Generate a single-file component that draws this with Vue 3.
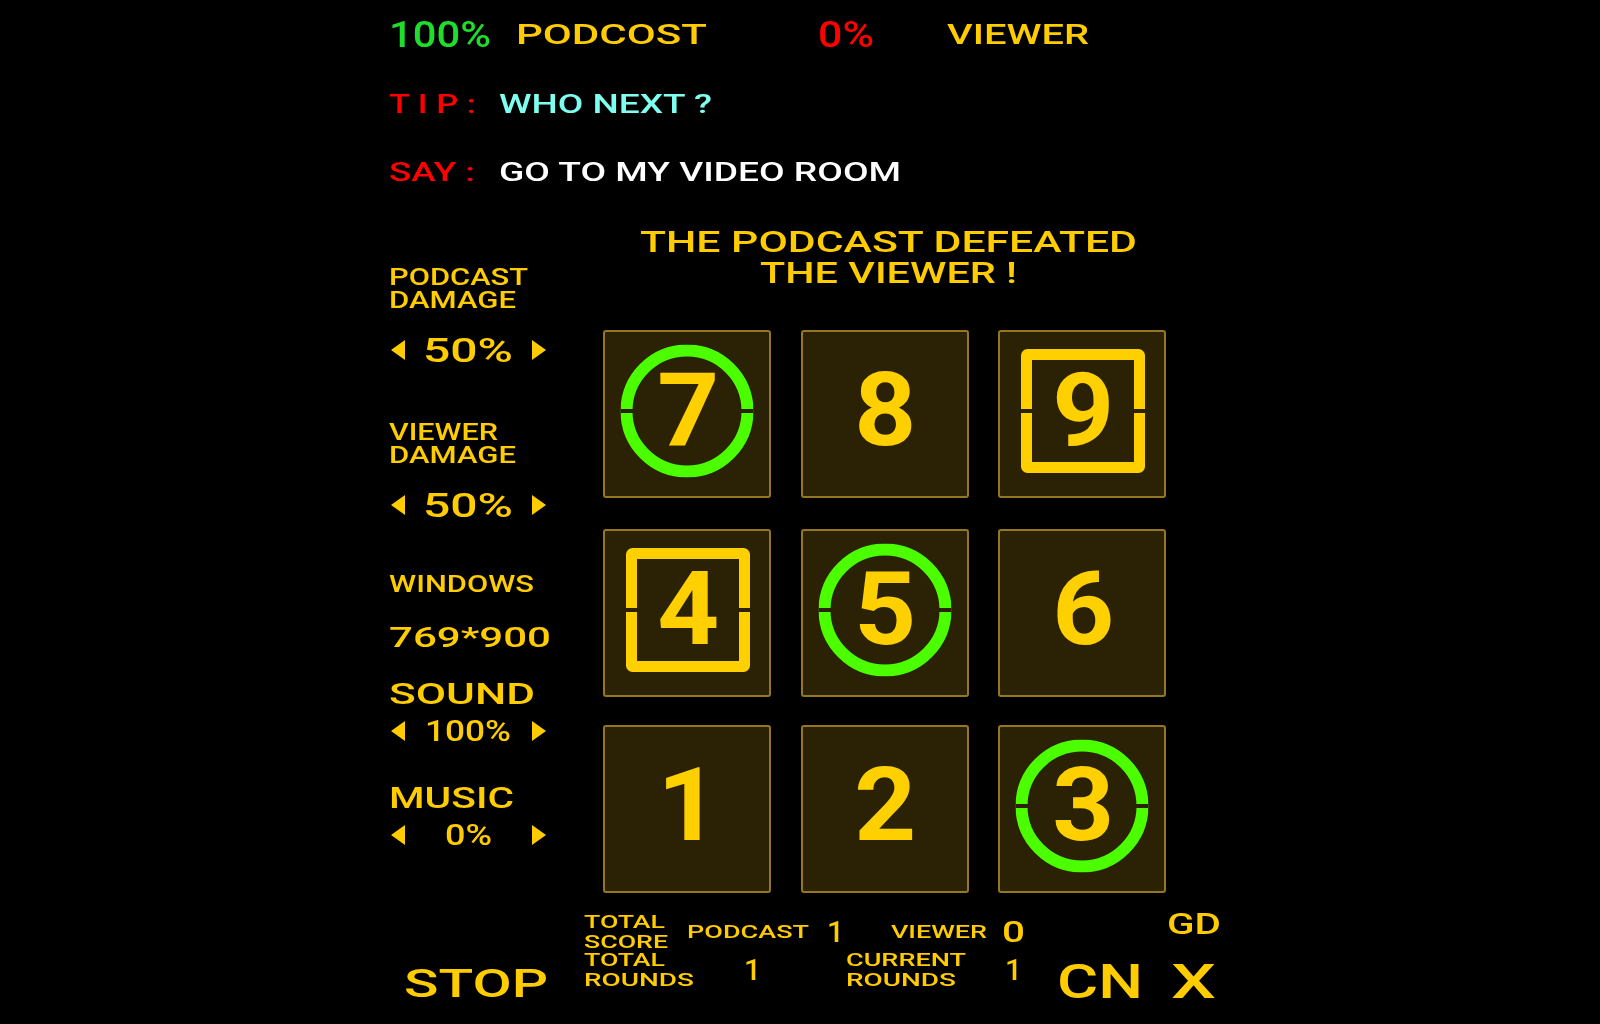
<script setup>
const vFit = {
  mounted(el, binding) {
    const natural = el.getBoundingClientRect().width
    el.style.transform = `scaleX(${binding.value / natural})`
    el.style.marginRight = `${binding.value - natural}px`
  }
}
const cards = [
  { n: 7, mark: 'ring' }, { n: 8 }, { n: 9, mark: 'square' },
  { n: 4, mark: 'square' }, { n: 5, mark: 'ring' }, { n: 6 },
  { n: 1 }, { n: 2 }, { n: 3, mark: 'ring' }
]
</script>

<template>
  <div class="stage">
    <div class="top r1">
      <span class="cell w127"><span class="t big green" v-fit="102">100%</span></span>
      <span class="cell w302"><span class="t head gold" v-fit="191">PODCOST</span></span>
      <span class="cell w129"><span class="t big red" v-fit="56">0%</span></span>
      <span class="t head gold" v-fit="142">VIEWER</span>
    </div>
    <div class="top r2">
      <span class="cell w110"><span class="t tip red" v-fit="87">T I P :</span></span>
      <span class="t tip cyan" v-fit="213">WHO NEXT ?</span>
    </div>
    <div class="top r2">
      <span class="cell w110"><span class="t tip red" v-fit="86">SAY :</span></span>
      <span class="t tip white" v-fit="402">GO TO MY VIDEO ROOM</span>
    </div>

    <div class="main">
      <aside class="side">
        <div class="label first">
          <div class="row22"><span class="t lab" v-fit="139">PODCAST</span></div>
          <div class="row22"><span class="t lab" v-fit="127">DAMAGE</span></div>
        </div>
        <div class="stepper s1">
          <svg class="arrow" viewBox="0 0 14 20"><polygon points="14,0 14,20 0,10" /></svg>
          <span class="t val" v-fit="90">50%</span>
          <svg class="arrow" viewBox="0 0 14 20"><polygon points="0,0 0,20 14,10" /></svg>
        </div>
        <div class="label second">
          <div class="row22"><span class="t lab" v-fit="109">VIEWER</span></div>
          <div class="row22"><span class="t lab" v-fit="127">DAMAGE</span></div>
        </div>
        <div class="stepper s1">
          <svg class="arrow" viewBox="0 0 14 20"><polygon points="14,0 14,20 0,10" /></svg>
          <span class="t val" v-fit="90">50%</span>
          <svg class="arrow" viewBox="0 0 14 20"><polygon points="0,0 0,20 14,10" /></svg>
        </div>
        <div class="line windows"><span class="t lab" v-fit="145">WINDOWS</span></div>
        <div class="line size"><span class="t sizeval" v-fit="162">769*900</span></div>
        <div class="line sound"><span class="t lab3" v-fit="146">SOUND</span></div>
        <div class="stepper s2">
          <svg class="arrow" viewBox="0 0 14 20"><polygon points="14,0 14,20 0,10" /></svg>
          <span class="t val2" v-fit="86">100%</span>
          <svg class="arrow" viewBox="0 0 14 20"><polygon points="0,0 0,20 14,10" /></svg>
        </div>
        <div class="line music"><span class="t lab3" v-fit="125">MUSIC</span></div>
        <div class="stepper s3">
          <svg class="arrow" viewBox="0 0 14 20"><polygon points="14,0 14,20 0,10" /></svg>
          <span class="t val2" v-fit="47">0%</span>
          <svg class="arrow" viewBox="0 0 14 20"><polygon points="0,0 0,20 14,10" /></svg>
        </div>
      </aside>

      <section class="board">
        <div class="title">
          <div class="row31"><span class="t ttl" v-fit="497">THE PODCAST DEFEATED</span></div>
          <div class="row31"><span class="t ttl" v-fit="257">THE VIEWER !</span></div>
        </div>
        <div class="grid">
          <div v-for="c in cards" :key="c.n" class="card">
            <span class="digit">{{ c.n }}</span>
            <svg v-if="c.mark === 'ring'" class="mark ring" viewBox="0 0 133 133">
              <circle cx="66.5" cy="66.5" r="60.5" />
              <rect x="0" y="64.5" width="133" height="4" />
            </svg>
            <svg v-if="c.mark === 'square'" class="mark square" viewBox="0 0 124 124">
              <rect class="frame" x="5.5" y="5.5" width="113" height="113" rx="1" />
              <rect class="cut" x="0" y="60" width="124" height="4" />
            </svg>
          </div>
        </div>
      </section>
    </div>

    <footer class="bottom">
      <div class="stopcol"><span class="t stop" v-fit="144">STOP</span></div>
      <div class="stats">
        <div class="statrow">
          <div class="c103 two">
            <div class="row20"><span class="t st" v-fit="81">TOTAL</span></div>
            <div class="row20"><span class="t st" v-fit="84">SCORE</span></div>
          </div>
          <span class="cell c143"><span class="t st" v-fit="122">PODCAST</span></span>
          <span class="cell c61"><span class="num">1</span></span>
          <span class="cell c111"><span class="t st" v-fit="96">VIEWER</span></span>
          <span class="t num" v-fit="23">0</span>
        </div>
        <div class="statrow">
          <div class="c162 two">
            <div class="row20"><span class="t st" v-fit="81">TOTAL</span></div>
            <div class="row20"><span class="t st" v-fit="110">ROUNDS</span></div>
          </div>
          <span class="cell c100"><span class="num">1</span></span>
          <div class="c161 two">
            <div class="row20"><span class="t st" v-fit="120">CURRENT</span></div>
            <div class="row20"><span class="t st" v-fit="110">ROUNDS</span></div>
          </div>
          <span class="num">1</span>
        </div>
      </div>
      <div class="rightcol">
        <div class="gd"><span class="t gdt" v-fit="54">GD</span></div>
        <div class="cnx">
          <span class="t cn" v-fit="86">CN</span>
          <span class="t cn" v-fit="45">X</span>
        </div>
      </div>
    </footer>
  </div>
</template>

<style scoped>
.stage {
  box-sizing: border-box;
  height: 1024px;
  overflow: hidden;
  padding-left: 389px;
  background: #000;
  color: #ffcc00;
  font-family: Roboto, "Liberation Sans", sans-serif;
  font-weight: 500;
  filter: blur(0.4px);
}
.t {
  display: inline-block;
  white-space: nowrap;
  transform-origin: left center;
}
.cell { display: flex; align-items: center; flex: none; }
.top { display: flex; align-items: center; }
.r1 { height: 70px; }
.r2 { height: 68px; }
.w127 { width: 127px; }
.w302 { width: 302px; }
.w129 { width: 129px; }
.w110 { width: 110px; }
.big { font-size: 36px; line-height: 36px; }
.head { font-size: 27px; line-height: 30px; }
.tip { font-size: 26px; line-height: 28px; }
.green { color: #1ede2b; }
.red { color: #ff0000; }
.cyan { color: #7ffff0; }
.white { color: #ffffff; }
.gold { color: #ffcc00; }

.main { display: flex; }
.side { width: 214px; flex: none; }
.row22 { display: flex; height: 22.5px; align-items: center; }
.row31 { display: flex; height: 31px; align-items: center; justify-content: center; }
.row20 { display: flex; height: 20px; align-items: center; }
.first { margin-top: 61px; }
.second { margin-top: 56px; }
.lab { font-size: 23px; line-height: 22px; }
.sizeval { font-size: 28px; line-height: 24px; }
.lab3 { font-size: 29px; line-height: 26px; }
.stepper {
  width: 155px;
  margin-left: 2px;
  display: flex;
  align-items: center;
  justify-content: space-between;
}
.s1 { height: 32px; margin-top: 22px; }
.s2 { height: 28px; margin-top: 10px; }
.s3 { height: 28px; margin-top: 10px; }
.arrow { width: 14px; height: 20px; fill: #ffcc00; flex: none; }
.val { font-size: 34px; line-height: 32px; margin-left: -2px; }
.val2 { font-size: 30px; line-height: 28px; margin-left: -1px; }
.line { display: flex; align-items: center; }
.windows { height: 24px; margin-top: 52px; }
.size { height: 24px; margin-top: 29px; }
.sound { height: 26px; margin-top: 31px; }
.music { height: 26px; margin-top: 40px; }

.board { width: 564px; flex: none; }
.title {
  margin-top: 21px;
  padding-left: 6px;
}
.ttl { font-size: 29px; line-height: 31px; }
.grid {
  margin-top: 40.5px;
  display: grid;
  grid-template-columns: repeat(3, 168px);
  grid-template-rows: 199.5px 196px 168px;
  column-gap: 29.5px;
}
.card {
  box-sizing: border-box;
  height: 168px;
  position: relative;
  display: flex;
  align-items: center;
  justify-content: center;
  background: #2b2205;
  border: 2px solid #947720;
  border-radius: 3px;
}
.digit {
  position: relative;
  z-index: 1;
  font-size: 102px;
  font-weight: 700;
  line-height: 1;
  color: #ffd000;
  margin: 0 0 8px 2px;
  transform: scaleX(1.06);
}
.mark {
  position: absolute;
  left: 50%;
  top: 50%;
  transform: translate(-50%, calc(-50% - 3px));
}
.ring { width: 133px; height: 133px; }
.ring circle { fill: none; stroke: #4cff00; stroke-width: 12; }
.ring rect { fill: #2b2205; }
.square { width: 124px; height: 124px; margin-left: 1px; }
.square .frame { fill: none; stroke: #ffd000; stroke-width: 11; }
.square .cut { fill: #2b2205; }

.bottom { display: flex; }
.stopcol { width: 195px; flex: none; display: flex; align-items: flex-start; box-sizing: border-box; padding: 74px 0 0 15px; }
.stop { font-size: 38px; line-height: 34px; }
.stats { width: 473px; flex: none; padding-top: 20px; }
.statrow { height: 38px; display: flex; align-items: center; }
.st { font-size: 19px; line-height: 20px; }
.num { font-size: 30px; line-height: 30px; }
.c103 { width: 103px; flex: none; }
.c143 { width: 140px; }
.c61 { width: 64px; }
.c111 { width: 111px; }
.c162 { width: 160px; flex: none; }
.c100 { width: 102px; }
.c161 { width: 159px; flex: none; }
.rightcol { flex: none; width: 170px; }
.gd { margin-left: 110px; margin-top: 19px; height: 24px; display: flex; }
.gdt { font-size: 29px; line-height: 24px; }
.cnx { margin-top: 26px; height: 40px; display: flex; gap: 28px; }
.cn { font-size: 48px; line-height: 40px; }
</style>

<style>
html, body { background: #000; margin: 0; }
</style>
